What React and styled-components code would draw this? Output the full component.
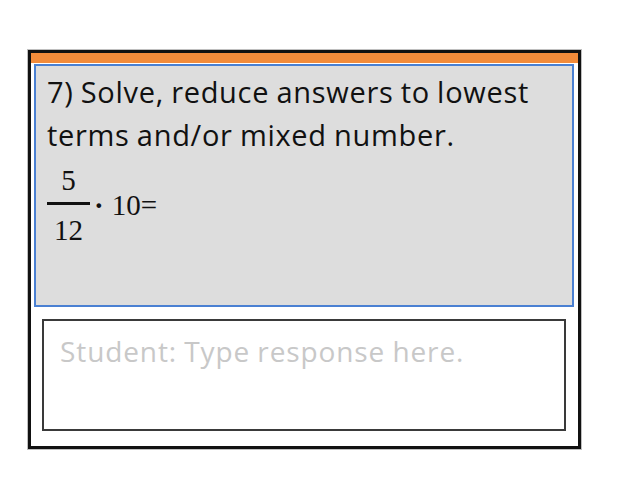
import React from 'react';
import styled, { createGlobalStyle } from 'styled-components';

const GlobalStyle = createGlobalStyle`
  body {
    margin: 0;
    background: #ffffff;
  }
`;

const Page = styled.div`
  width: 636px;
  height: 480px;
  padding: 50px 0 0 28px;
  box-sizing: border-box;
`;

const Frame = styled.div`
  width: 553px;
  height: 399px;
  box-sizing: border-box;
  border: 3px solid #111111;
  box-shadow: 0 0 0 1px rgba(0, 0, 0, 0.25);
  background: #ffffff;
  display: flex;
  flex-direction: column;
`;

const TopBar = styled.div`
  height: 10px;
  background: #f28b3a;
  flex-shrink: 0;
`;

const QuestionPanel = styled.div`
  height: 243px;
  margin: 1px 4px 0 3px;
  box-sizing: border-box;
  border: 2px solid #4a80d2;
  background: #dddddd;
  padding: 4px 0 0 11px;
  flex-shrink: 0;
`;

const Prompt = styled.div`
  font-family: "Open Sans", Lato, sans-serif;
  font-size: 29px;
  line-height: 43px;
  letter-spacing: 0.7px;
  word-spacing: -1px;
  color: #111111;
  width: 515px;
`;

const MathRow = styled.div`
  display: flex;
  align-items: center;
  margin-top: 9px;
  font-family: "Liberation Serif", "Times New Roman", serif;
  font-size: 29px;
  color: #111111;
`;

const Fraction = styled.div`
  display: flex;
  flex-direction: column;
  align-items: center;
  width: 43px;
`;

const FracPart = styled.span`
  line-height: 30px;
  padding: ${p => (p.denom ? '10px 0 0' : '0 0 7px')};
`;

const FracBar = styled.div`
  width: 100%;
  height: 3px;
  background: #111111;
`;

const Dot = styled.span`
  margin: 0 8px 0 4px;
  font-weight: bold;
`;

const ResponseBox = styled.div`
  height: 112px;
  margin: 12px 12px 0 11px;
  box-sizing: border-box;
  border: 2px solid #3a3a3a;
  padding: 11px 0 0 16px;
  font-family: "Open Sans", Lato, sans-serif;
  font-size: 28px;
  letter-spacing: 0.9px;
  word-spacing: -1px;
  color: #c8c8c8;
`;

export default function App() {
  return (
    <Page>
      <GlobalStyle />
      <Frame>
        <TopBar />
        <QuestionPanel>
          <Prompt>7) Solve, reduce answers to lowest terms and/or mixed number.</Prompt>
          <MathRow>
            <Fraction>
              <FracPart>5</FracPart>
              <FracBar />
              <FracPart denom>12</FracPart>
            </Fraction>
            <Dot>·</Dot>
            <span>10=</span>
          </MathRow>
        </QuestionPanel>
        <ResponseBox>Student: Type response here.</ResponseBox>
      </Frame>
    </Page>
  );
}
